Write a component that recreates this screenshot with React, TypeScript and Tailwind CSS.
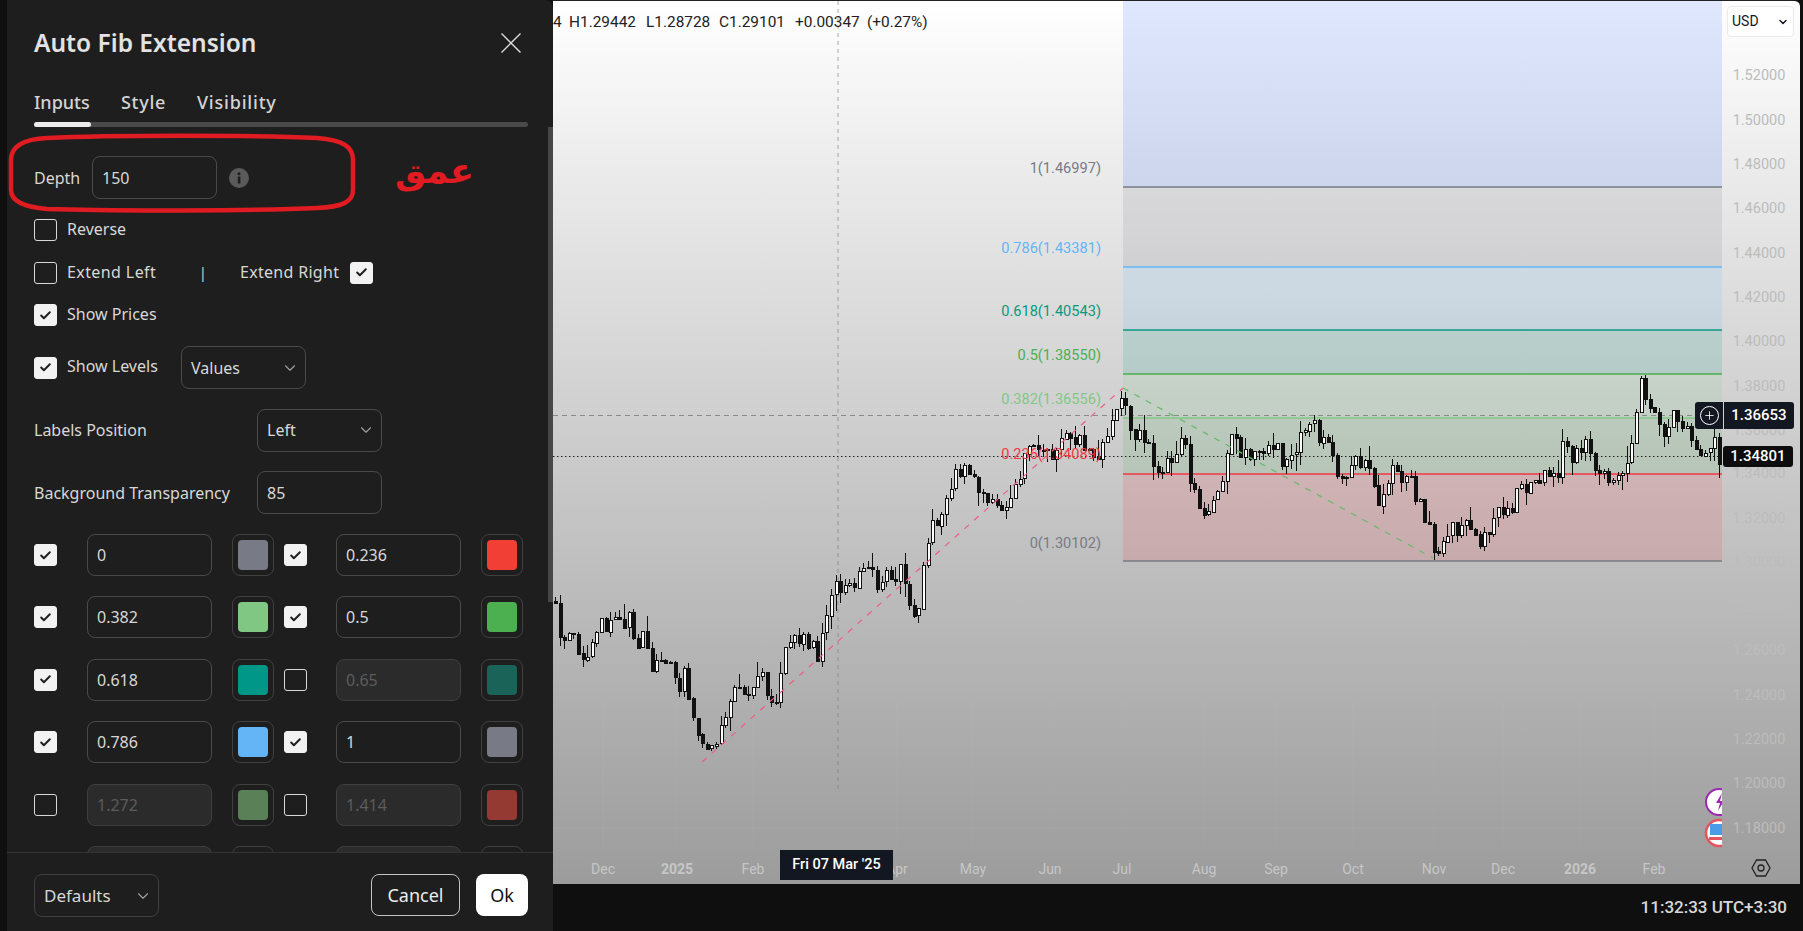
import { ChevronDown, Check, Plus } from "lucide-react";

const uiFont = "font-['Noto_Sans','Open_Sans',sans-serif]";

// chart helpers
const pricePath: [number, number][] = [
  [553, 603], [560, 633], [567, 642], [577, 640], [583, 660], [592, 647], [600, 627], [617, 617],
  [630, 620], [635, 640], [645, 630], [648, 667], [667, 660], [677, 693], [685, 673], [697, 727],
  [703, 752], [717, 748], [718, 717], [730, 710], [733, 678], [747, 687], [753, 693], [763, 673],
  [768, 697], [777, 690], [782, 660], [790, 648], [798, 638], [810, 640], [818, 652], [825, 630],
  [828, 587], [837, 587], [845, 575], [855, 577], [865, 562], [875, 583], [887, 577], [900, 573],
  [907, 577], [910, 625], [917, 613], [922, 570], [926, 540], [949, 489], [960, 469], [989, 494],
  [1000, 520], [1015, 483], [1031, 443], [1051, 453], [1067, 437], [1087, 443], [1097, 470],
  [1105, 437], [1115, 400], [1125, 398], [1128, 427], [1148, 433], [1156, 470], [1177, 453],
  [1184, 440], [1189, 483], [1202, 517], [1215, 487], [1225, 467], [1233, 435], [1251, 467],
  [1256, 443], [1279, 443], [1282, 473], [1294, 443], [1315, 427], [1323, 440], [1328, 450],
  [1340, 485], [1353, 463], [1369, 457], [1376, 497], [1387, 487], [1394, 467], [1410, 483],
  [1422, 503], [1438, 558], [1451, 527], [1463, 523], [1479, 550], [1494, 510], [1512, 517],
  [1515, 483], [1527, 497], [1532, 477], [1556, 477], [1561, 448], [1579, 457], [1586, 443],
  [1599, 473], [1620, 485], [1627, 463], [1635, 420], [1641, 377], [1650, 410], [1666, 447],
  [1673, 410], [1694, 433], [1701, 460], [1714, 440], [1721, 460],
];

function priceAt(x: number) {
  for (let i = 1; i < pricePath.length; i++) {
    const [x0, y0] = pricePath[i - 1];
    const [x1, y1] = pricePath[i];
    if (x <= x1) return y0 + ((y1 - y0) * (x - x0)) / (x1 - x0);
  }
  return 460;
}

let seed = 17;
function rnd() {
  seed = (seed * 16807) % 2147483647;
  return seed / 2147483647;
}

type Candle = { x: number; o: number; c: number; h: number; l: number };
const candles: Candle[] = [];
let lastClose = 600;
for (let x = 555; x < 1721; x += 4.6) {
  const c = priceAt(x) + (rnd() - 0.5) * 20;
  const h = Math.min(lastClose, c) - rnd() * rnd() * 18;
  const l = Math.max(lastClose, c) + rnd() * rnd() * 18;
  candles.push({ x: Math.round(x), o: lastClose, c, h, l });
  lastClose = c;
}

const zones = [
  { y: 0, h: 186, fill: "#2962ff" },
  { y: 186, h: 80, fill: "#787b86" },
  { y: 266, h: 63, fill: "#64b5f6" },
  { y: 329, h: 44, fill: "#089981" },
  { y: 373, h: 44, fill: "#81c784" },
  { y: 417, h: 56, fill: "#4caf50" },
  { y: 473, h: 87, fill: "#f23645" },
];

const levels = [
  { y: 186, label: "1(1.46997)", labelY: 167, color: "#787b86" },
  { y: 266, label: "0.786(1.43381)", labelY: 247, color: "#64b5f6" },
  { y: 329, label: "0.618(1.40543)", labelY: 310, color: "#089981" },
  { y: 373, label: "0.5(1.38550)", labelY: 354, color: "#4caf50" },
  { y: 417, label: "0.382(1.36556)", labelY: 398, color: "#81c784" },
  { y: 473, label: "0.236(1.34089)", labelY: 453, color: "#f23645" },
  { y: 560, label: "0(1.30102)", labelY: 542, color: "#787b86" },
];

const axisPrices = [
  ["1.52000", 74], ["1.50000", 119], ["1.48000", 163], ["1.46000", 207], ["1.44000", 252],
  ["1.42000", 296], ["1.40000", 340], ["1.38000", 385], ["1.36000", 429], ["1.34000", 472],
  ["1.32000", 517], ["1.30000", 561], ["1.28000", 605], ["1.26000", 649], ["1.24000", 694],
  ["1.22000", 738], ["1.20000", 782], ["1.18000", 827],
] as const;

const axisTimes = [
  ["Dec", 603], ["2025", 677], ["Feb", 753], ["Apr", 897], ["May", 973], ["Jun", 1050], ["Jul", 1122],
  ["Aug", 1204], ["Sep", 1276], ["Oct", 1353], ["Nov", 1434], ["Dec", 1503], ["2026", 1580], ["Feb", 1654],
] as const;

const ohlc = [
  ["4", 553],
  ["H1.29442", 569],
  ["L1.28728", 646],
  ["C1.29101", 719],
  ["+0.00347", 795],
  ["(+0.27%)", 867],
] as const;

function ChartDrawing() {
  return (
    <svg viewBox="553 0 1247 884" className="block w-[1247px] h-[884px]" fontFamily="Roboto, sans-serif">
      <defs>
        <clipPath id="paneClip">
          <rect x="553" y="0" width="1169" height="884" />
        </clipPath>
      </defs>

      {axisTimes.map(([t, x]) => (
        <line key={t + x} x1={x} x2={x} y1="700" y2="850" stroke="#fff" strokeOpacity="0.04" />
      ))}
      <line x1="553" x2="1722" y1="827" y2="827" stroke="#fff" strokeOpacity="0.05" />

      {zones.map((z) => (
        <rect key={z.y} x="1123" y={z.y} width="599" height={z.h} fill={z.fill} fillOpacity="0.15" />
      ))}
      {levels.map((l) => (
        <line key={l.y} x1="1123" x2="1722" y1={l.y} y2={l.y} stroke={l.color} strokeWidth="1.3" />
      ))}

      {/* crosshair */}
      <line x1="838" x2="838" y1="0" y2="790" stroke="#777" strokeOpacity="0.6" strokeDasharray="4 4" />
      <line x1="553" x2="1697" y1="414.5" y2="414.5" stroke="#8a8a8a" strokeDasharray="5 4" />
      <line x1="553" x2="1722" y1="455.5" y2="455.5" stroke="#222" strokeDasharray="1.5 2.5" />

      <g clipPath="url(#paneClip)" shapeRendering="crispEdges">
        {candles.map((c) => {
          const up = c.c < c.o;
          const top = Math.round(Math.min(c.o, c.c));
          const height = Math.max(1, Math.round(Math.abs(c.o - c.c)));
          return (
            <g key={c.x}>
              <line x1={c.x + 0.5} x2={c.x + 0.5} y1={c.h} y2={c.l} stroke="#111" />
              <rect
                x={c.x - 1}
                y={top + 0.5}
                width="3"
                height={height}
                fill={up ? "#fff" : "#111"}
                stroke="#111"
                strokeWidth="1"
              />
            </g>
          );
        })}
      </g>

      {/* auto fib trend lines */}
      <line x1="702" y1="761" x2="1123" y2="387" stroke="#ef5d80" strokeWidth="1.2" strokeDasharray="6 7" />
      <line x1="1123" y1="387" x2="1433" y2="557" stroke="#66bb6a" strokeWidth="1.2" strokeDasharray="6 7" />

      {levels.map((l) => (
        <text key={l.y} x="1101" y={l.labelY + 5} textAnchor="end" fontSize="14.6" fill={l.color}>
          {l.label}
        </text>
      ))}

      {ohlc.map(([t, x]) => (
        <text key={t} x={x} y="26" fontSize="15.4" fill="#222">
          {t}
        </text>
      ))}

      {axisPrices.map(([p, y]) => (
        <text key={p} x="1759" y={y + 5} textAnchor="middle" fontSize="14.5" fill="#bcbcbc">
          {p}
        </text>
      ))}
      {axisTimes.map(([t, x]) => (
        <text
          key={t + x}
          x={x}
          y="873"
          textAnchor="middle"
          fontSize="14"
          fontWeight={t.length === 4 ? 700 : 400}
          fill="#c6c6c6"
        >
          {t}
        </text>
      ))}

      {/* event markers cut by the price scale */}
      <g clipPath="url(#paneClip)">
        <circle cx="1719" cy="801" r="13" fill="#fff" stroke="#9c27b0" strokeWidth="2" />
        <path d="M1722 792l-6 10h4l-2 8 6-10h-4z" fill="#9c27b0" />
        <circle cx="1719" cy="832" r="13" fill="#fff" stroke="#e5535f" strokeWidth="2.5" />
        <path d="M1710 823h14v11h-14z" fill="#4a9be8" />
        <path d="M1709 836h14v3h-14z" fill="#e5535f" />
      </g>

      {/* scale settings */}
      <path d="M1752 867l4.5-8h9l4.5 8-4.5 8h-9z" fill="none" stroke="#222" strokeWidth="1.3" />
      <circle cx="1761" cy="867" r="3" fill="none" stroke="#222" strokeWidth="1.3" />
    </svg>
  );
}

function Checkbox({ checked, className = "" }: { checked: boolean; className?: string }) {
  return (
    <span
      className={`flex w-[23px] h-[22px] shrink-0 items-center justify-center rounded-[3px] border ${
        checked ? "bg-[#f2f2f2] border-[#f2f2f2]" : "border-[#d8d8d8]"
      } ${className}`}
    >
      {checked && <Check size={13} strokeWidth={3.6} className="text-[#1e1e1e]" />}
    </span>
  );
}

function Field({ value, disabled, className = "" }: { value: string; disabled?: boolean; className?: string }) {
  return (
    <div
      className={`flex items-center w-[125px] h-[42px] pl-[9px] rounded-[8px] border text-[16px] ${
        disabled ? "bg-[#2b2b2b] border-[#3f3f3f] text-[#5c5c5c]" : "border-[#4a4a4a] text-[#d8d8d8]"
      } ${className}`}
    >
      {value}
    </div>
  );
}

function Select({ value, className = "" }: { value: string; className?: string }) {
  return (
    <div
      className={`flex items-center justify-between w-[125px] h-[43px] pl-[9px] pr-[6px] rounded-[8px] border border-[#4a4a4a] text-[16px] text-[#d8d8d8] ${className}`}
    >
      {value}
      <ChevronDown size={18} strokeWidth={1.5} className="text-[#a0a0a0]" />
    </div>
  );
}

function Swatch({ color }: { color: string }) {
  return (
    <div className="flex items-center justify-center w-[42px] h-[42px] rounded-[8px] border border-[#404040]">
      <div className="w-[30px] h-[30px] rounded-[4px]" style={{ backgroundColor: color }} />
    </div>
  );
}

const levelRows = [
  [
    { on: true, value: "0", color: "#787b86" },
    { on: true, value: "0.236", color: "#f23f36" },
  ],
  [
    { on: true, value: "0.382", color: "#81c784" },
    { on: true, value: "0.5", color: "#4caf50" },
  ],
  [
    { on: true, value: "0.618", color: "#009688" },
    { on: false, value: "0.65", color: "#1a6358" },
  ],
  [
    { on: true, value: "0.786", color: "#64b5f6" },
    { on: true, value: "1", color: "#787b86" },
  ],
  [
    { on: false, value: "1.272", color: "#5a8058" },
    { on: false, value: "1.414", color: "#943a33" },
  ],
  // only the top edge of this row shows above the footer
  [
    { on: false, value: "", color: "#1e3a78" },
    { on: false, value: "", color: "#6b2a3a" },
  ],
];

function SettingsPanel() {
  return (
    <div className={`relative flex flex-col w-[546px] h-full bg-[#1e1e1e] rounded-tr-[8px] ${uiFont}`}>
      {/* Header */}
      <div className="flex items-center justify-between pl-[27px] pr-[32px] pt-[26px] h-[60px]">
        <h2 className="text-[24.5px] leading-[34px] font-semibold text-[#e2e2e2]">Auto Fib Extension</h2>
        <svg width="20" height="20" viewBox="0 0 20 20" stroke="#dcdcdc" strokeWidth="1.4">
          <path d="M0.5 0.5l19 19M19.5 0.5l-19 19" />
        </svg>
      </div>

      {/* Tabs */}
      <div className="px-[27px] mt-[29px]">
        <div className="flex h-[26px] items-center text-[18px] font-medium text-[#d4d4d4]">
          <span className="w-[87px]">Inputs</span>
          <span className="w-[76px] tracking-[0.7px]">Style</span>
          <span className="tracking-[0.8px]">Visibility</span>
        </div>
        <div className="mt-[7px] h-[5px] w-[494px] rounded-full bg-[#4a4a4a]">
          <div className="h-full w-[57px] rounded-full bg-[#ececec]" />
        </div>
      </div>

      {/* Inputs */}
      <div className="flex-1 min-h-0 overflow-hidden pt-[29px] pl-[27px] flex flex-col gap-5 text-[16px] text-[#d8d8d8]">
        <div className="flex items-center gap-[9px] h-[43px] shrink-0">
          <span className="w-[49px]">Depth</span>
          <Field value="150" className="h-[43px]" />
          <svg width="20" height="20" viewBox="0 0 20 20" className="ml-[3px]">
            <circle cx="10" cy="10" r="10" fill="#5a5a5a" />
            <rect x="8.8" y="8.5" width="2.6" height="7" fill="#1e1e1e" />
            <circle cx="10" cy="5.8" r="1.5" fill="#1e1e1e" />
          </svg>
        </div>

        <div className="flex items-center gap-[10px] h-[22px] shrink-0">
          <Checkbox checked={false} />
          <span className="pb-[2px]">Reverse</span>
        </div>

        <div className="flex items-center h-[23px] shrink-0">
          <Checkbox checked={false} />
          <span className="ml-[10px] w-[132px] pb-[2px] tracking-[0.4px]">Extend Left</span>
          <span className="w-[41px] text-[14px]">|</span>
          <span className="w-[110px] pb-[2px] tracking-[0.3px]">Extend Right</span>
          <Checkbox checked />
        </div>

        <div className="flex items-center gap-[10px] h-[22px] shrink-0">
          <Checkbox checked />
          <span className="pb-[2px]">Show Prices</span>
        </div>

        <div className="flex items-center h-[43px] shrink-0">
          <Checkbox checked />
          <span className="ml-[10px] w-[114px] pb-[3px]">Show Levels</span>
          <Select value="Values" />
        </div>

        <div className="flex items-center h-[42px] shrink-0">
          <span className="w-[223px]">Labels Position</span>
          <Select value="Left" className="h-[42px]" />
        </div>

        <div className="flex items-center h-[43px] shrink-0">
          <span className="w-[223px]">Background Transparency</span>
          <Field value="85" className="h-[43px]" />
        </div>

        <div className="grid grid-cols-[53px_145px_52px_52px_145px_42px] gap-y-[20.4px] shrink-0">
          {levelRows.flat().map((l, i) => (
            <div key={i} className="contents">
              <div className="flex items-center h-[42px]">
                <Checkbox checked={l.on} />
              </div>
              <Field value={l.value} disabled={!l.on} />
              <Swatch color={l.color} />
            </div>
          ))}
        </div>
      </div>

      {/* Footer */}
      <div className="flex items-start justify-between h-[79px] pt-[21px] pl-[27px] pr-[25px] border-t border-[#333]">
        <Select value="Defaults" className="h-[42px] border-[#404040] text-[17px]" />
        <div className="flex gap-[16px] text-[18px]">
          <button className="w-[89px] h-[42px] rounded-[8px] border border-[#c4c4c4] text-[#ececec]">Cancel</button>
          <button className="w-[52px] h-[42px] rounded-[8px] bg-white text-[#111]">Ok</button>
        </div>
      </div>

      {/* Scrollbar */}
      <div className="absolute right-0 top-[127px] h-[475px] w-[5px] bg-[#474747]" />

      {/* Hand drawn annotation */}
      <svg
        className="absolute left-0 top-[130px] pointer-events-none"
        width="360"
        height="86"
        viewBox="0 0 360 86"
        fill="none"
      >
        <path
          d="M4 30C4 14 20 9 40 8C100 5 250 5 310 8C335 10 346 16 346 30L346 60C346 72 335 77 310 78C250 81 100 81 40 79C18 77 4 72 4 60Z"
          stroke="#e11b22"
          strokeWidth="4.5"
        />
      </svg>
      <span
        dir="rtl"
        className="absolute left-[388px] top-[146px] font-['DejaVu_Sans',sans-serif] text-[35px] leading-[50px] font-bold text-[#e11b22]"
      >
        عمق
      </span>
    </div>
  );
}

export default function App() {
  return (
    <div className="flex w-[1803px] h-[931px] overflow-hidden bg-[#0f0f0f]">
      <div className="w-[7px] shrink-0" />
      <SettingsPanel />

      <div className="flex flex-col flex-1 min-w-0">
        <div className="relative w-[1247px] h-[884px] shrink-0 overflow-hidden rounded-tr-[6px] border-t border-[#222] bg-linear-to-b from-white to-[#9c9c9c] font-['Roboto',sans-serif]">
          <ChartDrawing />

          {/* Currency */}
          <div className="absolute left-[1174px] top-[5px] flex items-center justify-between w-[67px] h-[31px] pl-[4px] pr-[4px] rounded-[4px] border border-[#eaeaea] bg-white text-[14px] text-[#131722]">
            USD
            <ChevronDown size={12} strokeWidth={3} />
          </div>

          {/* Price tags */}
          <div className="absolute left-[1142px] top-[401px] flex items-center h-[27px] text-[15px] font-medium text-white">
            <div className="flex items-center justify-center w-[28px] h-full bg-[#131722] rounded-l-[3px]">
              <span className="flex items-center justify-center w-[19px] h-[19px] rounded-full border border-white">
                <Plus size={13} strokeWidth={1.5} />
              </span>
            </div>
            <div className="flex items-center justify-center w-[70px] h-full ml-px bg-[#131722] rounded-r-[3px]">1.36653</div>
          </div>
          <div className="absolute left-[1170px] top-[445px] flex items-center justify-center w-[70px] h-[21px] bg-[#0d0d0d] rounded-[3px] text-[15px] font-medium text-white">
            1.34801
          </div>

          {/* Crosshair date */}
          <div className="absolute left-[227px] top-[849px] flex items-center justify-center w-[113px] h-[30px] bg-[#131722] text-[14.5px] font-medium text-white">
            Fri 07 Mar '25
          </div>
        </div>

        <div className="flex flex-1 items-center justify-end pr-[16px] -ml-[553px] font-['Roboto',sans-serif] text-[17px] font-medium text-[#d8d8d8]">
          11:32:33 UTC+3:30
        </div>
      </div>
    </div>
  );
}
